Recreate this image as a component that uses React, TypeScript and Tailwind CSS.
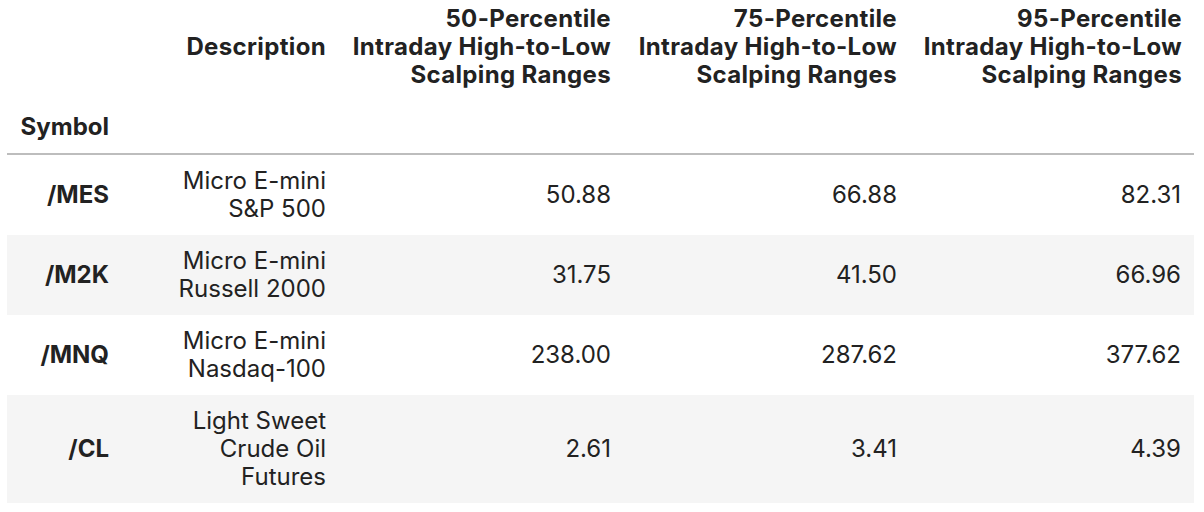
const rows = [
  { symbol: "/MES", desc: ["Micro E-mini", "S&P 500"], p50: "50.88", p75: "66.88", p95: "82.31" },
  { symbol: "/M2K", desc: ["Micro E-mini", "Russell 2000"], p50: "31.75", p75: "41.50", p95: "66.96" },
  { symbol: "/MNQ", desc: ["Micro E-mini", "Nasdaq-100"], p50: "238.00", p75: "287.62", p95: "377.62" },
  { symbol: "/CL", desc: ["Light Sweet", "Crude Oil", "Futures"], p50: "2.61", p75: "3.41", p95: "4.39" },
];

const pctHeaders = ["50", "75", "95"];

export default function App() {
  return (
    <div className="min-h-screen bg-white pl-[7px] text-[#222] font-['Inter','Liberation_Sans',sans-serif] text-[24px] leading-[28px]">
      <table className="table-fixed w-[1187px] border-collapse">
        <colgroup>
          <col className="w-[114px]" />
          <col className="w-[217px]" />
          <col className="w-[285px]" />
          <col className="w-[286px]" />
          <col className="w-[285px]" />
        </colgroup>
        <thead>
          <tr className="font-bold tracking-[0.35px]">
            <th className="pt-[5px] pb-3 pr-3" />
            <th className="pt-[5px] pb-3 pr-3 text-right align-middle">Description</th>
            {pctHeaders.map((p) => (
              <th key={p} className="pt-[5px] pb-3 pr-3 text-right align-middle whitespace-nowrap">
                <div>{p}-Percentile</div>
                <div>Intraday High-to-Low</div>
                <div>Scalping Ranges</div>
              </th>
            ))}
          </tr>
          <tr className="font-bold border-b-2 border-[#bdbdbd]">
            <th className="py-3 pr-3 text-right h-[52px]">Symbol</th>
            <th />
            <th />
            <th />
            <th />
          </tr>
        </thead>
        <tbody>
          {rows.map((r, i) => (
            <tr key={r.symbol} className={i % 2 === 1 ? "bg-[#f5f5f5]" : "bg-white"}>
              <th className="py-3 pr-3 text-right font-bold align-middle">{r.symbol}</th>
              <td className="py-3 pr-3 text-right align-middle">
                {r.desc.map((d) => (
                  <div key={d}>{d}</div>
                ))}
              </td>
              <td className="py-3 pr-3 text-right align-middle">{r.p50}</td>
              <td className="py-3 pr-3 text-right align-middle">{r.p75}</td>
              <td className="py-3 pr-[13px] text-right align-middle">{r.p95}</td>
            </tr>
          ))}
        </tbody>
      </table>
    </div>
  );
}
